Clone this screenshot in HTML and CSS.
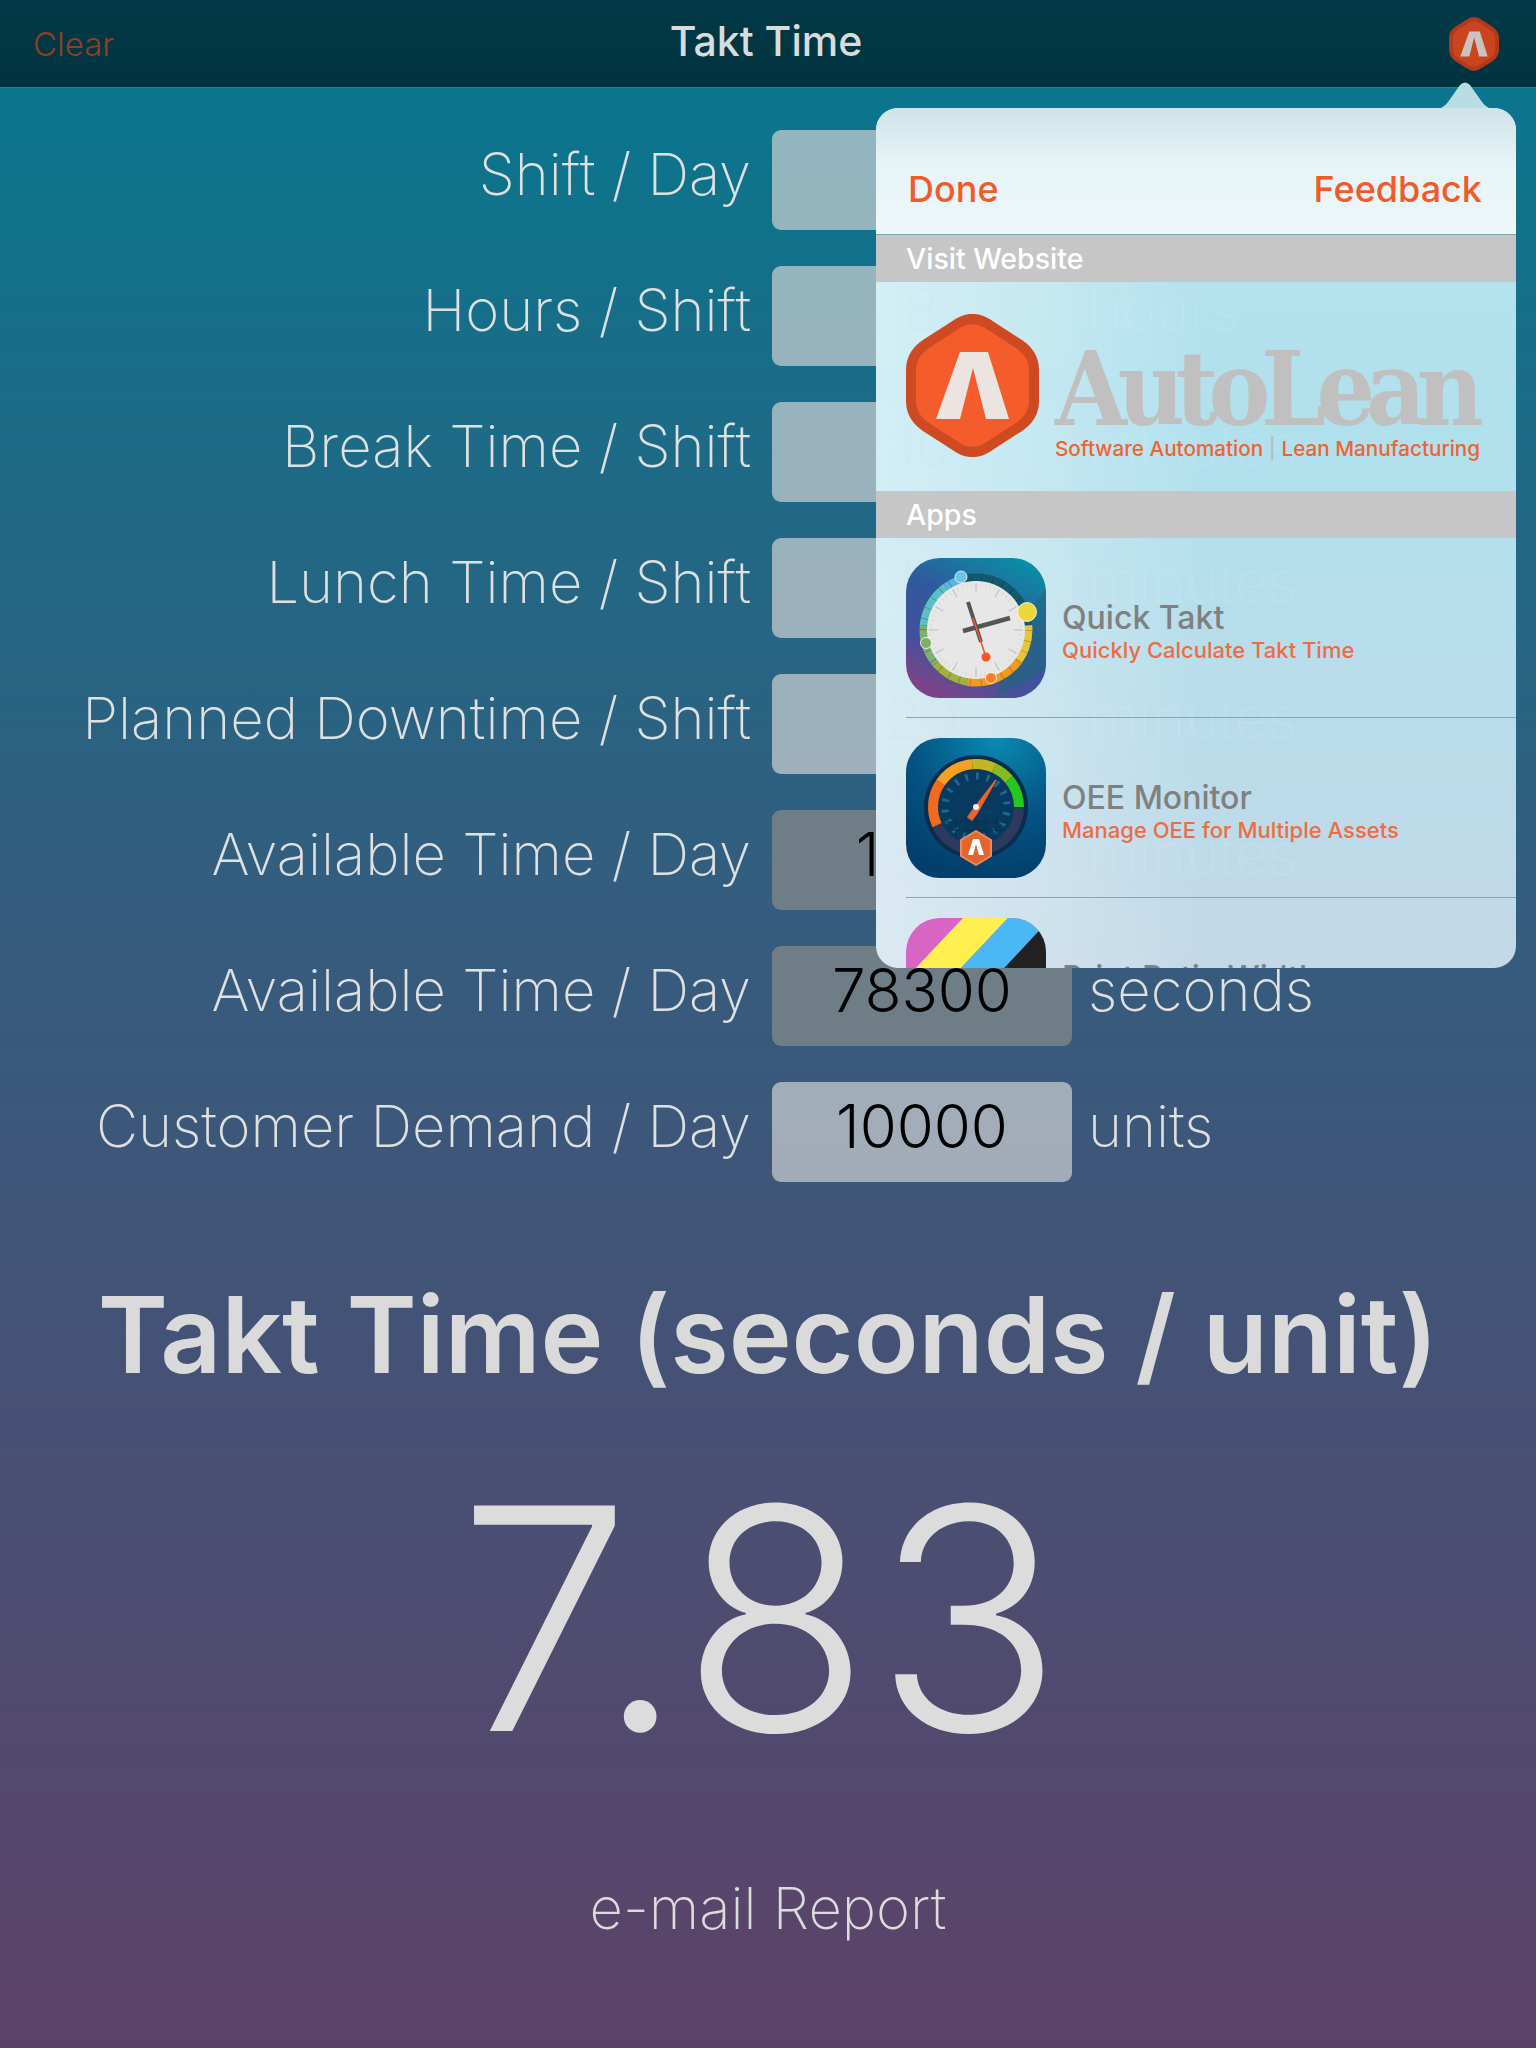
FILE: index.html
```html
<!DOCTYPE html>
<html lang="en">
<head>
<meta charset="utf-8">
<title>Takt Time</title>
<link rel="stylesheet" href="styles.css">
</head>
<body>
<div class="screen">
  <header class="nav">
    <span class="nav-clear">Clear</span>
    <span class="nav-title">Takt Time</span>
    <span class="nav-logo">
      <svg width="50" height="54" viewBox="0 0 133 143"><path d="M48 12 Q66.500 -2 85 12 L113 30 Q128 40 128 56 L128 87 Q128 103 113 113 L85 131 Q66.500 145 48 131 L20 113 Q5 103 5 87 L5 56 Q5 40 20 30Z" fill="#c9441f" stroke="#b03a1a" stroke-width="10"/><path d="M30 105 L54 38 L82 38 L103 105 L80 105 L67 54 L54 105Z" fill="#c9c2bf"/></svg>
    </span>
  </header>
  <main class="form">
    <div class="row"><span class="label">Shift / Day</span><span class="field">3</span><span class="unit">shifts</span></div>
    <div class="row"><span class="label">Hours / Shift</span><span class="field">8</span><span class="unit">hours</span></div>
    <div class="row"><span class="label">Break Time / Shift</span><span class="field">10</span><span class="unit">minutes</span></div>
    <div class="row"><span class="label">Lunch Time / Shift</span><span class="field">15</span><span class="unit">minutes</span></div>
    <div class="row"><span class="label">Planned Downtime / Shift</span><span class="field">20</span><span class="unit">minutes</span></div>
    <div class="row"><span class="label">Available Time / Day</span><span class="field field-calc">1305</span><span class="unit">minutes</span></div>
    <div class="row"><span class="label">Available Time / Day</span><span class="field field-calc">78300</span><span class="unit">seconds</span></div>
    <div class="row"><span class="label">Customer Demand / Day</span><span class="field">10000</span><span class="unit">units</span></div>
  </main>
  <section class="result">
    <h1 class="result-title">Takt Time (seconds / unit)</h1>
    <div class="result-value">7.83</div>
    <div class="result-mail">e-mail Report</div>
  </section>

  <aside class="popover">
    <svg class="popover-arrow" width="64" height="28" viewBox="0 0 64 28"><path d="M0 28 Q10 27 15 20 L27 3 Q32 -2 37 3 L49 20 Q54 27 64 28Z" fill="#b9dde4"/></svg>
    <div class="panel">
      <div class="panel-head"><span>Done</span><span>Feedback</span></div>
      <div class="section">Visit Website</div>
      <div class="brand">
        <svg class="brand-mark" width="133" height="143" viewBox="0 0 133 143"><path d="M48 12 Q66.500 -2 85 12 L113 30 Q128 40 128 56 L128 87 Q128 103 113 113 L85 131 Q66.500 145 48 131 L20 113 Q5 103 5 87 L5 56 Q5 40 20 30Z" fill="#f45d2b" stroke="#ce4a23" stroke-width="10"/><path d="M30 105 L54 38 L82 38 L103 105 L80 105 L67 54 L54 105Z" fill="#ece4e1"/></svg>
        <div class="brand-text">
          <div class="brand-name">AutoLean</div>
          <div class="brand-tag">Software Automation <i>|</i> Lean Manufacturing</div>
        </div>
      </div>
      <div class="section">Apps</div>
      <div class="app">
        <svg class="app-icon" viewBox="0 0 140 140">
          <defs>
            <clipPath id="sq"><rect width="140" height="140" rx="34"/></clipPath>
            <linearGradient id="qt" x1="0.800" y1="0" x2="0.300" y2="1"><stop offset="0" stop-color="#0b8ea3"/><stop offset=".4" stop-color="#2f5a9d"/><stop offset=".75" stop-color="#45509c"/><stop offset="1" stop-color="#7c4488"/></linearGradient>
            <radialGradient id="oe" cx=".65" cy="0" r="1"><stop offset="0" stop-color="#0a8ab2"/><stop offset=".6" stop-color="#045383"/><stop offset="1" stop-color="#033f6c"/></radialGradient>
          </defs>
          <g clip-path="url(#sq)">
            <rect width="140" height="140" fill="url(#qt)"/>
            <path d="M140 30 L140 110 L90 140 L110 70Z" fill="#1f6a78" opacity=".55"/>
            <g fill="none" stroke-width="9">
              <circle cx="70" cy="72" r="52" stroke="#135a70"/>
              <circle cx="70" cy="72" r="52" pathLength="360" stroke="#e8c63a" stroke-dasharray="50 310" transform="rotate(-5 70 72)"/>
              <circle cx="70" cy="72" r="52" pathLength="360" stroke="#f29a1e" stroke-dasharray="65 295" transform="rotate(35 70 72)"/>
              <circle cx="70" cy="72" r="52" pathLength="360" stroke="#a3b13c" stroke-dasharray="40 320" transform="rotate(100 70 72)"/>
              <circle cx="70" cy="72" r="52" pathLength="360" stroke="#7eb070" stroke-dasharray="45 315" transform="rotate(140 70 72)"/>
              <circle cx="70" cy="72" r="52" pathLength="360" stroke="#5cbfc4" stroke-dasharray="50 310" transform="rotate(185 70 72)"/>
              <circle cx="70" cy="72" r="52" pathLength="360" stroke="#58b4dc" stroke-dasharray="20 340" transform="rotate(235 70 72)"/>
              <circle cx="70" cy="72" r="52" pathLength="30" stroke="#000" stroke-opacity=".3" stroke-dasharray=".06 .94"/>
            </g>
            <circle cx="70" cy="72" r="49" fill="#e7e7e7"/>
            <g fill="none">
              <circle cx="70" cy="72" r="45" stroke="#d2d2d2" stroke-width="4" pathLength="60" stroke-dasharray=".12 .88"/>
              <circle cx="70" cy="72" r="42" stroke="#c6c6c6" stroke-width="9" pathLength="12" stroke-dasharray=".06 .94" stroke-dashoffset=".03"/>
            </g>
            <path d="M62 44 L75 84" stroke="#555" stroke-width="4"/>
            <path d="M57 73 L104 60" stroke="#555" stroke-width="4.500"/>
            <path d="M67 60 L80 99" stroke="#f4562a" stroke-width="1.600"/>
            <circle cx="80" cy="99" r="4.500" fill="#f4562a"/>
            <g stroke="#fff" stroke-width=".8">
              <circle cx="55" cy="19" r="6" fill="#6ac4e6"/>
              <circle cx="121" cy="54" r="9.500" fill="#ecd73f"/>
              <circle cx="85" cy="120" r="5.500" fill="#f5822a"/>
              <circle cx="20" cy="85" r="5.500" fill="#7fae63"/>
            </g>
          </g>
        </svg>
        <div class="app-text"><div class="app-name">Quick Takt</div><div class="app-desc">Quickly Calculate Takt Time</div></div>
      </div>
      <div class="app">
        <svg class="app-icon" viewBox="0 0 140 140">
          <g clip-path="url(#sq)">
            <rect width="140" height="140" fill="url(#oe)"/>
            <circle cx="70" cy="69" r="52" fill="#0b2c4c"/>
            <circle cx="70" cy="69" r="39" fill="#083a60"/>
            <g fill="none" stroke-width="10">
              <circle cx="70" cy="69" r="43" stroke="#2b3a5e"/>
              <circle cx="70" cy="69" r="43" pathLength="360" stroke="#f26a1e" stroke-dasharray="60 300" transform="rotate(155 70 69)"/>
              <circle cx="70" cy="69" r="43" pathLength="360" stroke="#f5a021" stroke-dasharray="50 310" transform="rotate(215 70 69)"/>
              <circle cx="70" cy="69" r="43" pathLength="360" stroke="#c3b526" stroke-dasharray="30 330" transform="rotate(265 70 69)"/>
              <circle cx="70" cy="69" r="43" pathLength="360" stroke="#85bd1f" stroke-dasharray="25 335" transform="rotate(295 70 69)"/>
              <circle cx="70" cy="69" r="43" pathLength="360" stroke="#25c81f" stroke-dasharray="40 320" transform="rotate(320 70 69)"/>
            </g>
            <circle cx="70" cy="69" r="31" fill="none" stroke="#1a6a92" stroke-width="7" pathLength="36" stroke-dasharray=".5 1.500" transform="rotate(170 70 69)"/>
            <path d="M40 84 H100 M43 92 H97 M50 76 V100 M60 76 V104 M70 76 V104 M80 76 V104 M90 76 V100" stroke="#0c2c4a" stroke-width="1"/>
            <path d="M62 79 L67 72 L90 42 L71 75 L66 82Z" fill="#f0622c" stroke="#f0622c" stroke-width="1.500"/>
            <circle cx="70" cy="69" r="3" fill="#e8f2f6"/>
            <path d="M70 93 L85 102 L85 118 L70 127 L55 118 L55 102Z" fill="#e2652e" stroke="#ef8a55" stroke-width="2" stroke-linejoin="round"/>
            <path d="M62 117 L67 101 L73 101 L78 117 L73 117 L70 106 L67 117Z" fill="#fff"/>
          </g>
        </svg>
        <div class="app-text"><div class="app-name">OEE Monitor</div><div class="app-desc">Manage OEE for Multiple Assets</div></div>
      </div>
      <div class="app">
        <svg class="app-icon" viewBox="0 0 140 140">
          <g clip-path="url(#sq)">
            <rect width="140" height="140" fill="#d864c4"/>
            <path d="M57 0 H102 L-30 140 H-75Z" fill="#fff04f"/>
            <path d="M102 0 H145 L14 140 H-30Z" fill="#4ab8f5"/>
            <path d="M145 0 H180 V140 H14Z" fill="#212121"/>
          </g>
        </svg>
        <div class="app-text"><div class="app-name">Print Ratio Width</div></div>
      </div>
    </div>
  </aside>
</div>
</body>
</html>
```
FILE: styles.css
```css
* { box-sizing: border-box; }
html, body { margin: 0; padding: 0; }
body { font-family: "Inter", "Liberation Sans", sans-serif; }
.screen {
  position: relative;
  width: 1536px;
  height: 2048px;
  overflow: hidden;
  color: #dcdcdc;
  background: linear-gradient(180deg, #06788f 0%, #355c7e 45%, #5d4268 100%);
}
.nav {
  height: 88px;
  display: grid;
  grid-template-columns: 1fr auto 1fr;
  align-items: center;
  padding: 0 37px 0 33px;
  background: linear-gradient(180deg, #023a47, #00333f);
  border-bottom: 1px solid #1d8494;
}
.nav-clear { font-size: 33px; font-weight: 300; color: #8f3f24; }
.nav-title { font-size: 41px; font-weight: 500; color: #d9dcdc; padding-bottom: 5px; }
.nav-logo { justify-self: end; display: flex; }
.form {
  display: flex;
  flex-direction: column;
  gap: 36px;
  padding-top: 42px;
}
.row {
  display: grid;
  grid-template-columns: 753px 300px auto;
  column-gap: 19px;
  align-items: center;
  height: 100px;
}
.label { text-align: right; font-size: 58px; font-weight: 250; color: #dfe0e0; white-space: nowrap; padding: 0 2px 13px 0; }
.unit { font-size: 58px; font-weight: 250; color: #dfe0e0; margin-left: -3px; padding-bottom: 13px; }
.field {
  height: 100px;
  line-height: 88px;
  text-align: center;
  background: rgba(205, 210, 212, .7);
  border-radius: 9px;
  font-size: 60px;
  font-weight: 300;
  color: #000;
}
.field-calc { background: #6f7d87; }
.result { text-align: center; }
.result-title {
  margin: 88px 0 0;
  font-size: 106.500px;
  line-height: 130px;
  font-weight: 600;
  color: #dadada;
}
.result-value {
  margin-top: 49px;
  padding-right: 12px;
  font-size: 310px;
  line-height: 340px;
  letter-spacing: 4px;
  font-weight: 300;
  color: #dcdcdc;
}
.result-mail {
  margin-top: 84px;
  font-size: 58px;
  font-weight: 250;
  color: #dcdcdc;
}
.popover { position: absolute; left: 876px; top: 82px; width: 640px; }
.popover-arrow { position: absolute; left: 557px; top: 0; }
.panel {
  position: relative;
  margin-top: 26px;
  height: 860px;
  overflow: hidden;
  border-radius: 22px;
  background:
    linear-gradient(90deg, rgba(255,255,255,.42) 0%, rgba(255,255,255,.2) 30%, rgba(255,255,255,0) 52%),
    linear-gradient(180deg, rgba(184,228,240,.985) 0%, rgba(180,226,239,.985) 40%, rgba(197,219,233,.985) 100%);
}
.panel-head {
  height: 127px;
  border-bottom: 1px solid #7fa6ae;
  padding: 59px 34px 0 32px;
  display: flex;
  justify-content: space-between;
  font-size: 36px;
  font-weight: 500;
  color: #f25a2a;
  background: linear-gradient(180deg, #cfe3e8 0%, #e6f5f8 45%, #eef6f8 100%);
}
.section {
  height: 47px;
  line-height: 47px;
  padding-left: 30px;
  background: #c6c6c6;
  color: #fff;
  font-size: 28.500px;
  font-weight: 500;
}
.brand {
  height: 209px;
  display: flex;
  align-items: flex-start;
  padding: 32px 0 0 30px;
  gap: 16px;
}
.brand-text { padding-top: 29px; }
.brand-name {
  font-family: "DejaVu Serif Condensed", "DejaVu Serif", serif;
  font-weight: 700;
  font-size: 103px;
  line-height: 92px;
  letter-spacing: -9.500px;
  color: #c0c0c0;
}
.brand-tag { font-size: 20.700px; font-weight: 500; color: #f0632f; margin-top: 1px; white-space: nowrap; }
.brand-tag i { font-style: normal; color: #bcbcbc; }
.app {
  height: 180px;
  display: flex;
  align-items: flex-start;
  margin-left: 30px;
  padding-top: 20px;
  gap: 16px;
  border-bottom: 1px solid #80a8c2;
}
.app:last-child { border-bottom: 0; }
.app-icon { width: 140px; height: 140px; flex: none; }
.app-text { padding-top: 42px; }
.app-name { font-size: 32px; line-height: 36px; font-weight: 500; color: #808080; }
.app-desc { font-size: 22px; line-height: 28px; font-weight: 500; color: #ec6d43; }
```
